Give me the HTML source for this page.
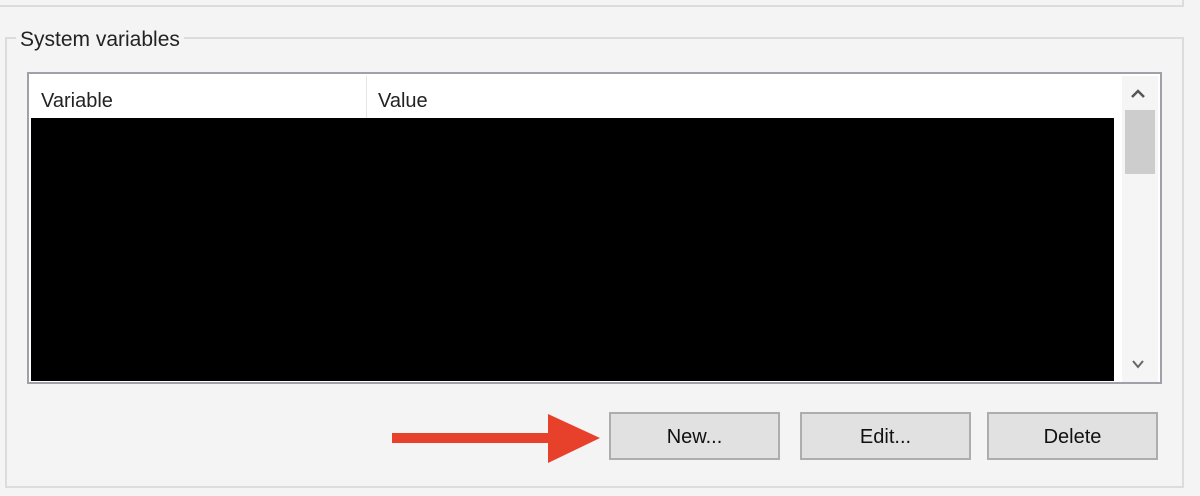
<!DOCTYPE html>
<html><head><style>
body{margin:0;width:1200px;height:496px;background:#f4f4f4;position:relative;overflow:hidden;font-family:"Liberation Sans",sans-serif;}
div{position:absolute;box-sizing:border-box;}
.btn{background:#e1e1e1;border:2px solid #adadad;font-size:20px;color:#111;text-align:center;line-height:47px;}
</style></head><body>
<div style="left:0;top:0;width:1184px;height:7px;border-right:2px solid #dcdcdc;border-bottom:2px solid #dcdcdc;"></div>
<div style="left:5px;top:37px;width:1179px;height:451px;border:2px solid #dcdcdc;"></div>
<div style="left:16px;top:28px;background:#f4f4f4;padding:0 4px;font-size:21px;color:#222;">System variables</div>
<div style="left:27px;top:72px;width:1135px;height:312px;border:2px solid #a0a0a8;background:#fff;"></div>
<div style="left:366px;top:76px;width:1px;height:42px;background:#e5e5e5;"></div>
<div style="left:41px;top:90px;font-size:20px;color:#222;">Variable</div>
<div style="left:378px;top:90px;font-size:20px;color:#222;">Value</div>
<div style="left:31px;top:118px;width:1083px;height:263px;background:#000;"></div>
<div style="left:1122px;top:76px;width:36px;height:306px;background:#f5f5f5;"></div>
<div style="left:1125px;top:110px;width:30px;height:64px;background:#cdcdcd;"></div>
<svg style="position:absolute;left:1130px;top:88px" width="16" height="12"><path d="M2 9 L8 3 L14 9" stroke="#555" stroke-width="2.5" fill="none"/></svg>
<svg style="position:absolute;left:1130px;top:358px" width="16" height="12"><path d="M3 3 L8 9 L13 3" stroke="#666" stroke-width="2" fill="none"/></svg>
<div class="btn" style="left:609px;top:412px;width:171px;height:48px;">New...</div>
<div class="btn" style="left:800px;top:412px;width:171px;height:48px;">Edit...</div>
<div class="btn" style="left:987px;top:412px;width:171px;height:48px;">Delete</div>
<svg style="position:absolute;left:390px;top:410px" width="215" height="58"><path d="M2 23 H158 V4 L210 28 L158 53 V33 H2 Z" fill="#e8412b"/></svg>
</body></html>
